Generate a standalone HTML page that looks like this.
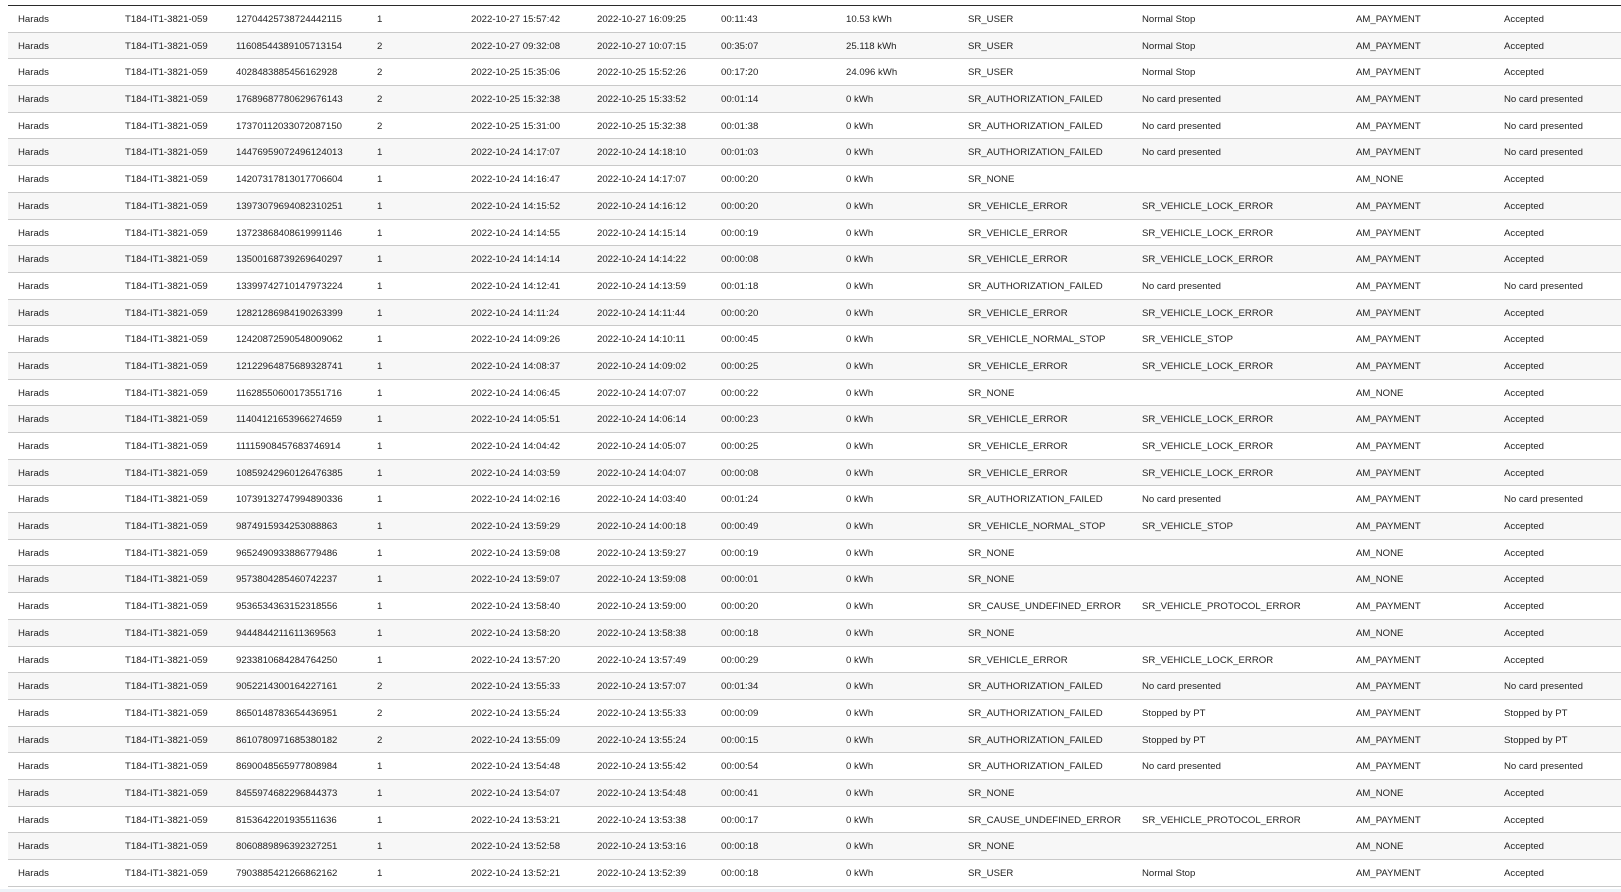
<!DOCTYPE html>
<html><head><meta charset="utf-8"><style>
html,body{margin:0;padding:0;background:#fff;width:1621px;height:892px;overflow:hidden}
body{font-family:"Liberation Sans",Arial,sans-serif;font-size:9.6px;color:#222}
.t{position:absolute;left:8px;top:5px;width:1613px;border-top:1.5px solid #2a2a2a}
.r{position:relative;height:26.7px;box-sizing:border-box;border-bottom:1px solid #c9c9c9;background:#fff}
.r:nth-child(even){background:#f7f7f7}
.r span{position:absolute;top:8px;white-space:nowrap}
.c1{left:10px}.c2{left:117px}.c3{left:228px}.c4{left:369px}.c5{left:463px}.c6{left:589px}.c7{left:713px}.c8{left:838px}.c9{left:960px}.c10{left:1134px}.c11{left:1348px}.c12{left:1496px}
.foot{position:absolute;left:0;top:889px;width:1621px;height:3px;background:#eef3f8}
</style></head><body>
<div class="t">
<div class="r"><span class="c1">Harads</span><span class="c2">T184-IT1-3821-059</span><span class="c3">12704425738724442115</span><span class="c4">1</span><span class="c5">2022-10-27 15:57:42</span><span class="c6">2022-10-27 16:09:25</span><span class="c7">00:11:43</span><span class="c8">10.53 kWh</span><span class="c9">SR_USER</span><span class="c10">Normal Stop</span><span class="c11">AM_PAYMENT</span><span class="c12">Accepted</span></div>
<div class="r"><span class="c1">Harads</span><span class="c2">T184-IT1-3821-059</span><span class="c3">11608544389105713154</span><span class="c4">2</span><span class="c5">2022-10-27 09:32:08</span><span class="c6">2022-10-27 10:07:15</span><span class="c7">00:35:07</span><span class="c8">25.118 kWh</span><span class="c9">SR_USER</span><span class="c10">Normal Stop</span><span class="c11">AM_PAYMENT</span><span class="c12">Accepted</span></div>
<div class="r"><span class="c1">Harads</span><span class="c2">T184-IT1-3821-059</span><span class="c3">4028483885456162928</span><span class="c4">2</span><span class="c5">2022-10-25 15:35:06</span><span class="c6">2022-10-25 15:52:26</span><span class="c7">00:17:20</span><span class="c8">24.096 kWh</span><span class="c9">SR_USER</span><span class="c10">Normal Stop</span><span class="c11">AM_PAYMENT</span><span class="c12">Accepted</span></div>
<div class="r"><span class="c1">Harads</span><span class="c2">T184-IT1-3821-059</span><span class="c3">17689687780629676143</span><span class="c4">2</span><span class="c5">2022-10-25 15:32:38</span><span class="c6">2022-10-25 15:33:52</span><span class="c7">00:01:14</span><span class="c8">0 kWh</span><span class="c9">SR_AUTHORIZATION_FAILED</span><span class="c10">No card presented</span><span class="c11">AM_PAYMENT</span><span class="c12">No card presented</span></div>
<div class="r"><span class="c1">Harads</span><span class="c2">T184-IT1-3821-059</span><span class="c3">17370112033072087150</span><span class="c4">2</span><span class="c5">2022-10-25 15:31:00</span><span class="c6">2022-10-25 15:32:38</span><span class="c7">00:01:38</span><span class="c8">0 kWh</span><span class="c9">SR_AUTHORIZATION_FAILED</span><span class="c10">No card presented</span><span class="c11">AM_PAYMENT</span><span class="c12">No card presented</span></div>
<div class="r"><span class="c1">Harads</span><span class="c2">T184-IT1-3821-059</span><span class="c3">14476959072496124013</span><span class="c4">1</span><span class="c5">2022-10-24 14:17:07</span><span class="c6">2022-10-24 14:18:10</span><span class="c7">00:01:03</span><span class="c8">0 kWh</span><span class="c9">SR_AUTHORIZATION_FAILED</span><span class="c10">No card presented</span><span class="c11">AM_PAYMENT</span><span class="c12">No card presented</span></div>
<div class="r"><span class="c1">Harads</span><span class="c2">T184-IT1-3821-059</span><span class="c3">14207317813017706604</span><span class="c4">1</span><span class="c5">2022-10-24 14:16:47</span><span class="c6">2022-10-24 14:17:07</span><span class="c7">00:00:20</span><span class="c8">0 kWh</span><span class="c9">SR_NONE</span><span class="c11">AM_NONE</span><span class="c12">Accepted</span></div>
<div class="r"><span class="c1">Harads</span><span class="c2">T184-IT1-3821-059</span><span class="c3">13973079694082310251</span><span class="c4">1</span><span class="c5">2022-10-24 14:15:52</span><span class="c6">2022-10-24 14:16:12</span><span class="c7">00:00:20</span><span class="c8">0 kWh</span><span class="c9">SR_VEHICLE_ERROR</span><span class="c10">SR_VEHICLE_LOCK_ERROR</span><span class="c11">AM_PAYMENT</span><span class="c12">Accepted</span></div>
<div class="r"><span class="c1">Harads</span><span class="c2">T184-IT1-3821-059</span><span class="c3">13723868408619991146</span><span class="c4">1</span><span class="c5">2022-10-24 14:14:55</span><span class="c6">2022-10-24 14:15:14</span><span class="c7">00:00:19</span><span class="c8">0 kWh</span><span class="c9">SR_VEHICLE_ERROR</span><span class="c10">SR_VEHICLE_LOCK_ERROR</span><span class="c11">AM_PAYMENT</span><span class="c12">Accepted</span></div>
<div class="r"><span class="c1">Harads</span><span class="c2">T184-IT1-3821-059</span><span class="c3">13500168739269640297</span><span class="c4">1</span><span class="c5">2022-10-24 14:14:14</span><span class="c6">2022-10-24 14:14:22</span><span class="c7">00:00:08</span><span class="c8">0 kWh</span><span class="c9">SR_VEHICLE_ERROR</span><span class="c10">SR_VEHICLE_LOCK_ERROR</span><span class="c11">AM_PAYMENT</span><span class="c12">Accepted</span></div>
<div class="r"><span class="c1">Harads</span><span class="c2">T184-IT1-3821-059</span><span class="c3">13399742710147973224</span><span class="c4">1</span><span class="c5">2022-10-24 14:12:41</span><span class="c6">2022-10-24 14:13:59</span><span class="c7">00:01:18</span><span class="c8">0 kWh</span><span class="c9">SR_AUTHORIZATION_FAILED</span><span class="c10">No card presented</span><span class="c11">AM_PAYMENT</span><span class="c12">No card presented</span></div>
<div class="r"><span class="c1">Harads</span><span class="c2">T184-IT1-3821-059</span><span class="c3">12821286984190263399</span><span class="c4">1</span><span class="c5">2022-10-24 14:11:24</span><span class="c6">2022-10-24 14:11:44</span><span class="c7">00:00:20</span><span class="c8">0 kWh</span><span class="c9">SR_VEHICLE_ERROR</span><span class="c10">SR_VEHICLE_LOCK_ERROR</span><span class="c11">AM_PAYMENT</span><span class="c12">Accepted</span></div>
<div class="r"><span class="c1">Harads</span><span class="c2">T184-IT1-3821-059</span><span class="c3">12420872590548009062</span><span class="c4">1</span><span class="c5">2022-10-24 14:09:26</span><span class="c6">2022-10-24 14:10:11</span><span class="c7">00:00:45</span><span class="c8">0 kWh</span><span class="c9">SR_VEHICLE_NORMAL_STOP</span><span class="c10">SR_VEHICLE_STOP</span><span class="c11">AM_PAYMENT</span><span class="c12">Accepted</span></div>
<div class="r"><span class="c1">Harads</span><span class="c2">T184-IT1-3821-059</span><span class="c3">12122964875689328741</span><span class="c4">1</span><span class="c5">2022-10-24 14:08:37</span><span class="c6">2022-10-24 14:09:02</span><span class="c7">00:00:25</span><span class="c8">0 kWh</span><span class="c9">SR_VEHICLE_ERROR</span><span class="c10">SR_VEHICLE_LOCK_ERROR</span><span class="c11">AM_PAYMENT</span><span class="c12">Accepted</span></div>
<div class="r"><span class="c1">Harads</span><span class="c2">T184-IT1-3821-059</span><span class="c3">11628550600173551716</span><span class="c4">1</span><span class="c5">2022-10-24 14:06:45</span><span class="c6">2022-10-24 14:07:07</span><span class="c7">00:00:22</span><span class="c8">0 kWh</span><span class="c9">SR_NONE</span><span class="c11">AM_NONE</span><span class="c12">Accepted</span></div>
<div class="r"><span class="c1">Harads</span><span class="c2">T184-IT1-3821-059</span><span class="c3">11404121653966274659</span><span class="c4">1</span><span class="c5">2022-10-24 14:05:51</span><span class="c6">2022-10-24 14:06:14</span><span class="c7">00:00:23</span><span class="c8">0 kWh</span><span class="c9">SR_VEHICLE_ERROR</span><span class="c10">SR_VEHICLE_LOCK_ERROR</span><span class="c11">AM_PAYMENT</span><span class="c12">Accepted</span></div>
<div class="r"><span class="c1">Harads</span><span class="c2">T184-IT1-3821-059</span><span class="c3">11115908457683746914</span><span class="c4">1</span><span class="c5">2022-10-24 14:04:42</span><span class="c6">2022-10-24 14:05:07</span><span class="c7">00:00:25</span><span class="c8">0 kWh</span><span class="c9">SR_VEHICLE_ERROR</span><span class="c10">SR_VEHICLE_LOCK_ERROR</span><span class="c11">AM_PAYMENT</span><span class="c12">Accepted</span></div>
<div class="r"><span class="c1">Harads</span><span class="c2">T184-IT1-3821-059</span><span class="c3">10859242960126476385</span><span class="c4">1</span><span class="c5">2022-10-24 14:03:59</span><span class="c6">2022-10-24 14:04:07</span><span class="c7">00:00:08</span><span class="c8">0 kWh</span><span class="c9">SR_VEHICLE_ERROR</span><span class="c10">SR_VEHICLE_LOCK_ERROR</span><span class="c11">AM_PAYMENT</span><span class="c12">Accepted</span></div>
<div class="r"><span class="c1">Harads</span><span class="c2">T184-IT1-3821-059</span><span class="c3">10739132747994890336</span><span class="c4">1</span><span class="c5">2022-10-24 14:02:16</span><span class="c6">2022-10-24 14:03:40</span><span class="c7">00:01:24</span><span class="c8">0 kWh</span><span class="c9">SR_AUTHORIZATION_FAILED</span><span class="c10">No card presented</span><span class="c11">AM_PAYMENT</span><span class="c12">No card presented</span></div>
<div class="r"><span class="c1">Harads</span><span class="c2">T184-IT1-3821-059</span><span class="c3">9874915934253088863</span><span class="c4">1</span><span class="c5">2022-10-24 13:59:29</span><span class="c6">2022-10-24 14:00:18</span><span class="c7">00:00:49</span><span class="c8">0 kWh</span><span class="c9">SR_VEHICLE_NORMAL_STOP</span><span class="c10">SR_VEHICLE_STOP</span><span class="c11">AM_PAYMENT</span><span class="c12">Accepted</span></div>
<div class="r"><span class="c1">Harads</span><span class="c2">T184-IT1-3821-059</span><span class="c3">9652490933886779486</span><span class="c4">1</span><span class="c5">2022-10-24 13:59:08</span><span class="c6">2022-10-24 13:59:27</span><span class="c7">00:00:19</span><span class="c8">0 kWh</span><span class="c9">SR_NONE</span><span class="c11">AM_NONE</span><span class="c12">Accepted</span></div>
<div class="r"><span class="c1">Harads</span><span class="c2">T184-IT1-3821-059</span><span class="c3">9573804285460742237</span><span class="c4">1</span><span class="c5">2022-10-24 13:59:07</span><span class="c6">2022-10-24 13:59:08</span><span class="c7">00:00:01</span><span class="c8">0 kWh</span><span class="c9">SR_NONE</span><span class="c11">AM_NONE</span><span class="c12">Accepted</span></div>
<div class="r"><span class="c1">Harads</span><span class="c2">T184-IT1-3821-059</span><span class="c3">9536534363152318556</span><span class="c4">1</span><span class="c5">2022-10-24 13:58:40</span><span class="c6">2022-10-24 13:59:00</span><span class="c7">00:00:20</span><span class="c8">0 kWh</span><span class="c9">SR_CAUSE_UNDEFINED_ERROR</span><span class="c10">SR_VEHICLE_PROTOCOL_ERROR</span><span class="c11">AM_PAYMENT</span><span class="c12">Accepted</span></div>
<div class="r"><span class="c1">Harads</span><span class="c2">T184-IT1-3821-059</span><span class="c3">9444844211611369563</span><span class="c4">1</span><span class="c5">2022-10-24 13:58:20</span><span class="c6">2022-10-24 13:58:38</span><span class="c7">00:00:18</span><span class="c8">0 kWh</span><span class="c9">SR_NONE</span><span class="c11">AM_NONE</span><span class="c12">Accepted</span></div>
<div class="r"><span class="c1">Harads</span><span class="c2">T184-IT1-3821-059</span><span class="c3">9233810684284764250</span><span class="c4">1</span><span class="c5">2022-10-24 13:57:20</span><span class="c6">2022-10-24 13:57:49</span><span class="c7">00:00:29</span><span class="c8">0 kWh</span><span class="c9">SR_VEHICLE_ERROR</span><span class="c10">SR_VEHICLE_LOCK_ERROR</span><span class="c11">AM_PAYMENT</span><span class="c12">Accepted</span></div>
<div class="r"><span class="c1">Harads</span><span class="c2">T184-IT1-3821-059</span><span class="c3">9052214300164227161</span><span class="c4">2</span><span class="c5">2022-10-24 13:55:33</span><span class="c6">2022-10-24 13:57:07</span><span class="c7">00:01:34</span><span class="c8">0 kWh</span><span class="c9">SR_AUTHORIZATION_FAILED</span><span class="c10">No card presented</span><span class="c11">AM_PAYMENT</span><span class="c12">No card presented</span></div>
<div class="r"><span class="c1">Harads</span><span class="c2">T184-IT1-3821-059</span><span class="c3">8650148783654436951</span><span class="c4">2</span><span class="c5">2022-10-24 13:55:24</span><span class="c6">2022-10-24 13:55:33</span><span class="c7">00:00:09</span><span class="c8">0 kWh</span><span class="c9">SR_AUTHORIZATION_FAILED</span><span class="c10">Stopped by PT</span><span class="c11">AM_PAYMENT</span><span class="c12">Stopped by PT</span></div>
<div class="r"><span class="c1">Harads</span><span class="c2">T184-IT1-3821-059</span><span class="c3">8610780971685380182</span><span class="c4">2</span><span class="c5">2022-10-24 13:55:09</span><span class="c6">2022-10-24 13:55:24</span><span class="c7">00:00:15</span><span class="c8">0 kWh</span><span class="c9">SR_AUTHORIZATION_FAILED</span><span class="c10">Stopped by PT</span><span class="c11">AM_PAYMENT</span><span class="c12">Stopped by PT</span></div>
<div class="r"><span class="c1">Harads</span><span class="c2">T184-IT1-3821-059</span><span class="c3">8690048565977808984</span><span class="c4">1</span><span class="c5">2022-10-24 13:54:48</span><span class="c6">2022-10-24 13:55:42</span><span class="c7">00:00:54</span><span class="c8">0 kWh</span><span class="c9">SR_AUTHORIZATION_FAILED</span><span class="c10">No card presented</span><span class="c11">AM_PAYMENT</span><span class="c12">No card presented</span></div>
<div class="r"><span class="c1">Harads</span><span class="c2">T184-IT1-3821-059</span><span class="c3">8455974682296844373</span><span class="c4">1</span><span class="c5">2022-10-24 13:54:07</span><span class="c6">2022-10-24 13:54:48</span><span class="c7">00:00:41</span><span class="c8">0 kWh</span><span class="c9">SR_NONE</span><span class="c11">AM_NONE</span><span class="c12">Accepted</span></div>
<div class="r"><span class="c1">Harads</span><span class="c2">T184-IT1-3821-059</span><span class="c3">8153642201935511636</span><span class="c4">1</span><span class="c5">2022-10-24 13:53:21</span><span class="c6">2022-10-24 13:53:38</span><span class="c7">00:00:17</span><span class="c8">0 kWh</span><span class="c9">SR_CAUSE_UNDEFINED_ERROR</span><span class="c10">SR_VEHICLE_PROTOCOL_ERROR</span><span class="c11">AM_PAYMENT</span><span class="c12">Accepted</span></div>
<div class="r"><span class="c1">Harads</span><span class="c2">T184-IT1-3821-059</span><span class="c3">8060889896392327251</span><span class="c4">1</span><span class="c5">2022-10-24 13:52:58</span><span class="c6">2022-10-24 13:53:16</span><span class="c7">00:00:18</span><span class="c8">0 kWh</span><span class="c9">SR_NONE</span><span class="c11">AM_NONE</span><span class="c12">Accepted</span></div>
<div class="r"><span class="c1">Harads</span><span class="c2">T184-IT1-3821-059</span><span class="c3">7903885421266862162</span><span class="c4">1</span><span class="c5">2022-10-24 13:52:21</span><span class="c6">2022-10-24 13:52:39</span><span class="c7">00:00:18</span><span class="c8">0 kWh</span><span class="c9">SR_USER</span><span class="c10">Normal Stop</span><span class="c11">AM_PAYMENT</span><span class="c12">Accepted</span></div>
</div>
<div class="foot"></div>
</body></html>
